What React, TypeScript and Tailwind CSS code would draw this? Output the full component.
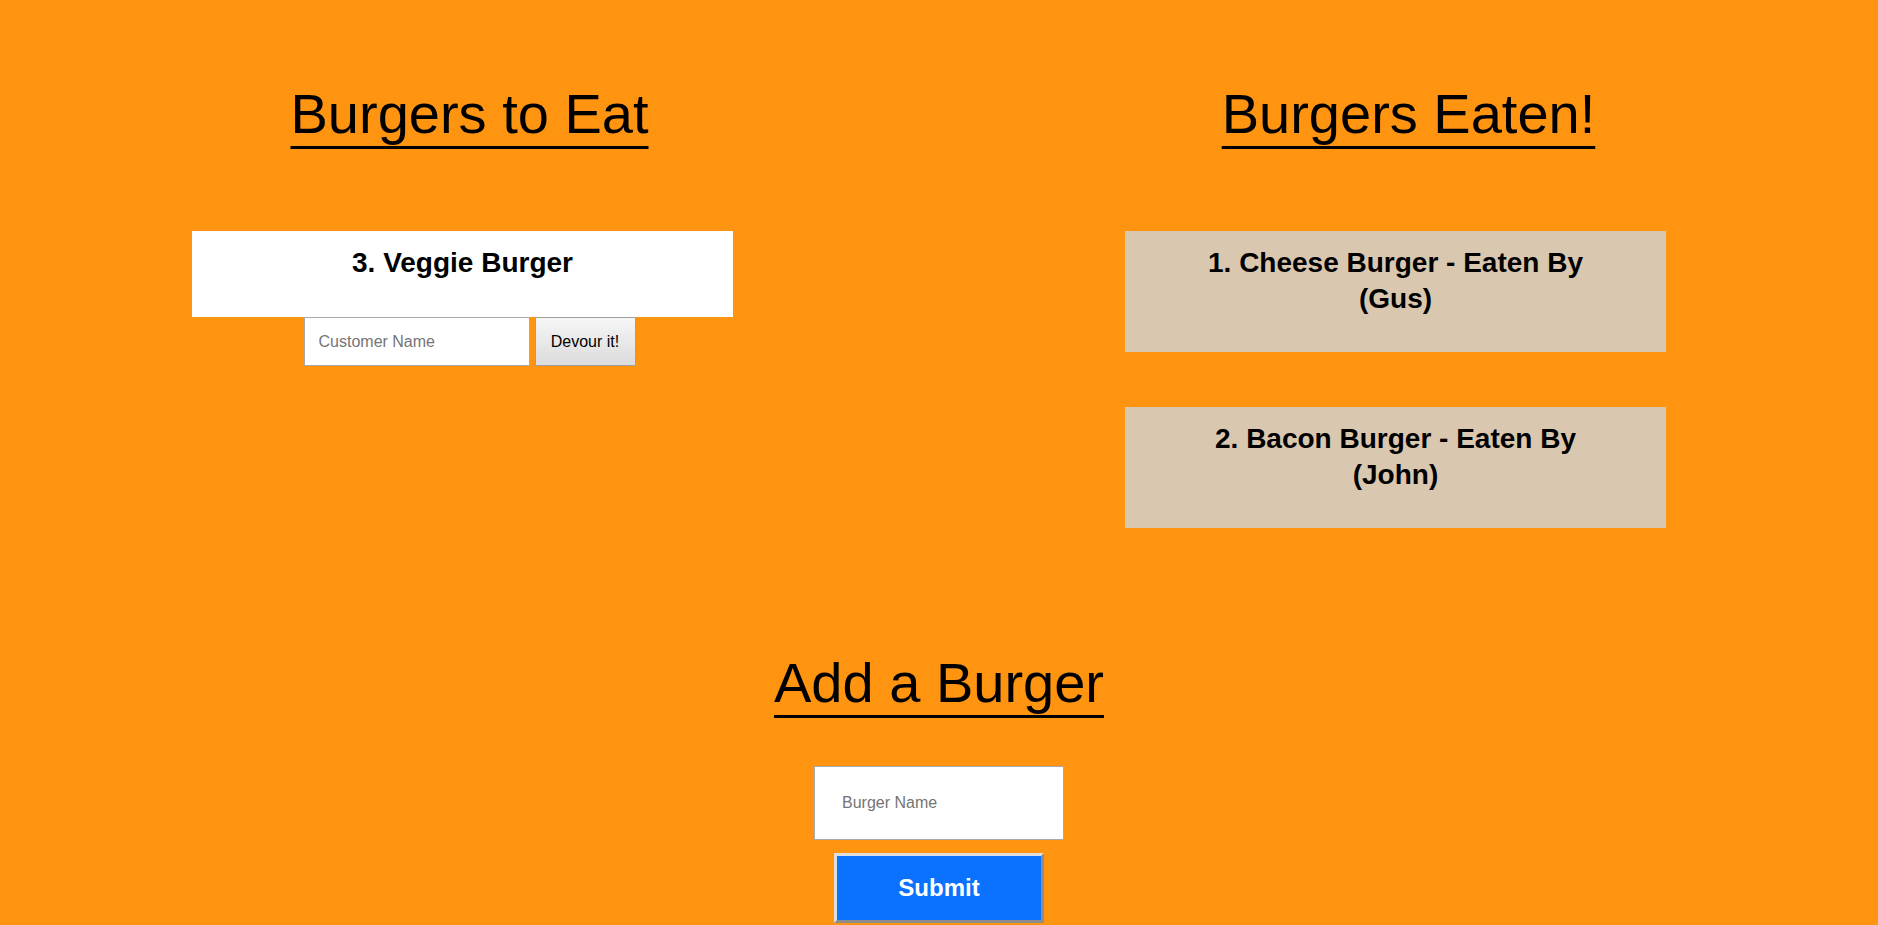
import React, { useState } from 'react';

type Burger = { id: number; name: string; eaten: boolean; eatenBy?: string };

const initialBurgers: Burger[] = [
  { id: 1, name: 'Cheese Burger', eaten: true, eatenBy: 'Gus' },
  { id: 2, name: 'Bacon Burger', eaten: true, eatenBy: 'John' },
  { id: 3, name: 'Veggie Burger', eaten: false },
];

const App = () => {
  const [burgers, setBurgers] = useState<Burger[]>(initialBurgers);
  const [customers, setCustomers] = useState<Record<number, string>>({});
  const [newBurger, setNewBurger] = useState('');

  const devour = (id: number) => {
    const name = (customers[id] || '').trim();
    if (!name) return;
    setBurgers(burgers.map(b => (b.id === id ? { ...b, eaten: true, eatenBy: name } : b)));
  };

  const addBurger = (e: React.FormEvent) => {
    e.preventDefault();
    if (newBurger.trim() === '') return;
    setBurgers([...burgers, { id: burgers.length + 1, name: newBurger.trim(), eaten: false }]);
    setNewBurger('');
  };

  const toEat = burgers.filter(b => !b.eaten);
  const eaten = burgers.filter(b => b.eaten);

  const headingClass =
    "text-[56px] leading-[67px] font-normal text-black underline decoration-[3px] underline-offset-[13px] [text-decoration-skip-ink:none] font-['Liberation_Sans',Arial,sans-serif]";

  return (
    <div className="w-screen min-h-screen overflow-hidden bg-[#ff9411] text-black font-['Liberation_Sans',Arial,sans-serif]">
      <div className="grid grid-cols-2">
        {/* Left column */}
        <div className="pt-[80px] flex flex-col">
          <h1 className={`text-center ${headingClass}`}>Burgers to Eat</h1>
          <div className="mt-[84px] flex flex-col gap-0">
            {toEat.map(b => (
              <div key={b.id} className="flex flex-col">
                <div className="ml-[192px] w-[541px] bg-white pt-[14px] pb-[36px]">
                  <h3 className="text-center text-[28px] leading-[36px] font-bold">
                    {b.id}. {b.name}
                  </h3>
                </div>
                <div className="flex justify-center gap-[5px]">
                  <input
                    type="text"
                    value={customers[b.id] || ''}
                    onChange={e => setCustomers({ ...customers, [b.id]: e.target.value })}
                    placeholder="Customer Name"
                    className="w-[226px] h-[49px] bg-white border border-[#a9a9a9] px-[14px] text-[16px] text-black placeholder:text-[#757575] outline-none"
                  />
                  <button
                    onClick={() => devour(b.id)}
                    className="w-[101px] h-[49px] border border-[#a0a0a0] bg-gradient-to-b from-[#f6f6f6] to-[#dcdcdc] text-[16px] text-black"
                  >
                    Devour it!
                  </button>
                </div>
              </div>
            ))}
          </div>
        </div>

        {/* Right column */}
        <div className="pt-[80px] flex flex-col">
          <h1 className={`text-center ${headingClass}`}>Burgers Eaten!</h1>
          <div className="mt-[84px] flex flex-col gap-[55px]">
            {eaten.map(b => (
              <div key={b.id} className="ml-[186px] w-[541px] bg-[#dac7af] pt-[14px] pb-[35px]">
                <h3 className="text-center text-[28px] leading-[36px] font-bold">
                  {b.id}. {b.name} - Eaten By
                  <br />({b.eatenBy})
                </h3>
              </div>
            ))}
          </div>
        </div>
      </div>

      {/* Add a burger */}
      <form onSubmit={addBurger} className="mt-[121px] flex flex-col items-center">
        <h1 className={headingClass}>Add a Burger</h1>
        <input
          type="text"
          value={newBurger}
          onChange={e => setNewBurger(e.target.value)}
          placeholder="Burger Name"
          className="mt-[50px] w-[250px] h-[74px] bg-white border border-[#a9a9a9] px-[27px] text-[16px] text-black placeholder:text-[#757575] outline-none"
        />
        <button
          type="submit"
          className="mt-[13px] w-[210px] h-[70px] bg-[#0a72ff] border-[3px] border-t-[#dedede] border-l-[#dedede] border-r-[#8c8c8c] border-b-[#8c8c8c] text-white text-[24px] font-bold"
        >
          Submit
        </button>
      </form>
    </div>
  );
};

export default App;
